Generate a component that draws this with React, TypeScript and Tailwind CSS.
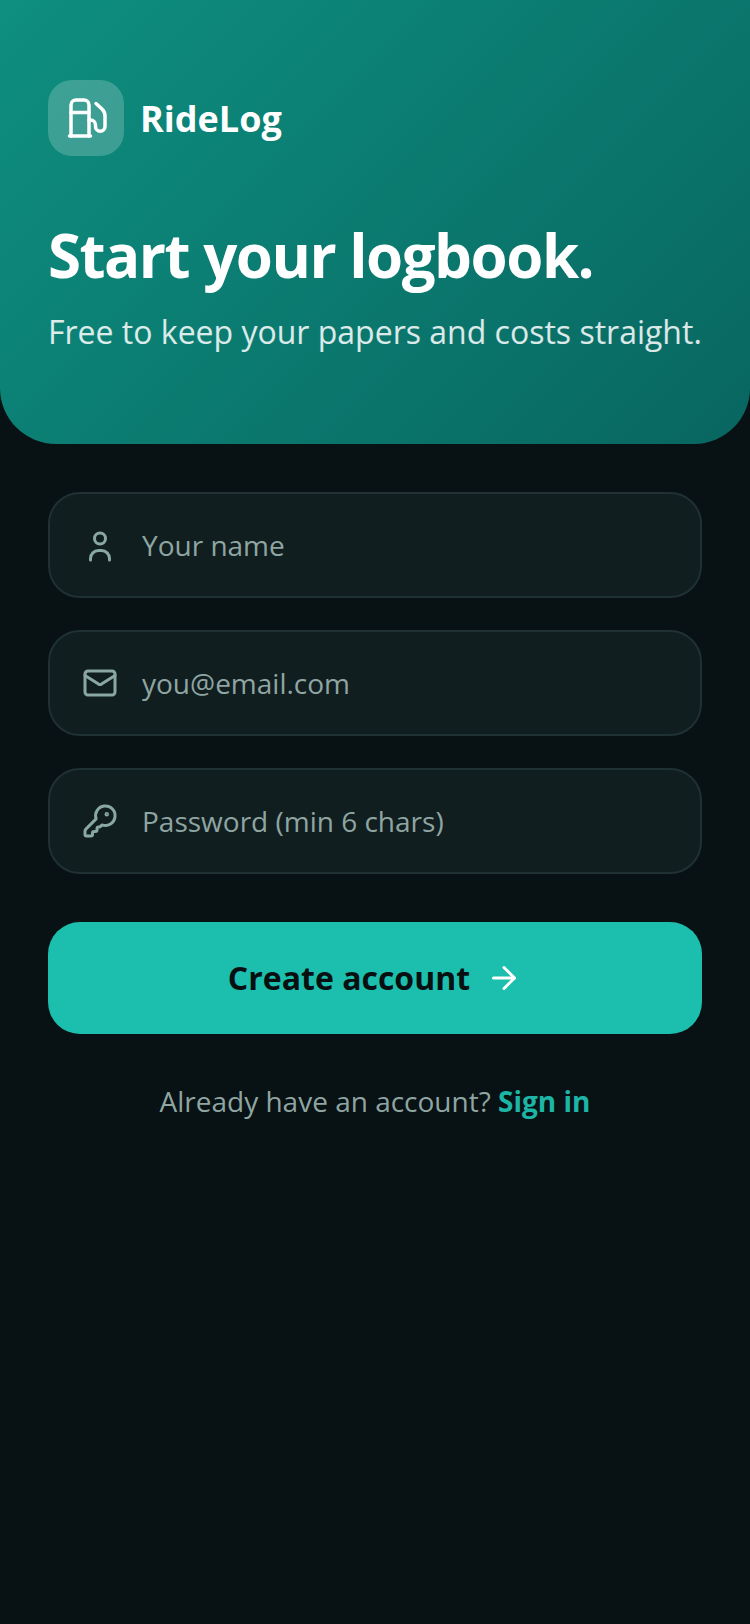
import { ArrowRight, KeyRound, Mail } from "lucide-react";

// the lucide versions are too wide for the pump and too big in the head for the user
function PumpIcon() {
  return (
    <svg width="48" height="48" viewBox="0 0 48 48" fill="none" stroke="currentColor" strokeWidth="3.5" strokeLinecap="round" strokeLinejoin="round" className="text-white">
      <path d="M9 42V11a5 5 0 0 1 5-5h8a5 5 0 0 1 5 5v31" />
      <path d="M7.5 42h21" />
      <path d="M9 18.5h18" />
      <path d="M27 26h1.5a5 5 0 0 1 5 5v1.5a4.75 4.75 0 0 0 9.5 0V22c0-3-1-5-3-7l-6-5.5" />
    </svg>
  );
}

function UserIcon() {
  return (
    <svg width="36" height="36" viewBox="0 0 36 36" fill="none" stroke="currentColor" strokeWidth="3" strokeLinecap="round" strokeLinejoin="round" className="shrink-0 text-[#8aa8a3]">
      <circle cx="18" cy="11.5" r="5.5" />
      <path d="M8.5 33v-1.5a8 8 0 0 1 8-8h3a8 8 0 0 1 8 8V33" />
    </svg>
  );
}

const fields = [
  { icon: <UserIcon />, placeholder: "Your name", type: "text" },
  { icon: <Mail size={36} className="shrink-0 text-[#8aa8a3]" />, placeholder: "you@email.com", type: "email" },
  { icon: <KeyRound size={36} className="shrink-0 text-[#8aa8a3]" />, placeholder: "Password (min 6 chars)", type: "password" },
];

function Field({ icon, placeholder, type }: (typeof fields)[number]) {
  return (
    <div className="flex h-[106px] items-center gap-[24px] rounded-[32px] border-2 border-[#1f3133] bg-[#111e20] px-[32px]">
      {icon}
      <input
        type={type}
        placeholder={placeholder}
        className="min-w-0 flex-1 bg-transparent text-[28px] text-white outline-none placeholder:text-[#8fa5a2]"
      />
    </div>
  );
}

export default function App() {
  return (
    <div className="min-h-[1624px] bg-[#081113] font-['Open_Sans',sans-serif]">
      <header className="h-[444px] rounded-b-[56px] bg-[linear-gradient(135deg,#0e8f80,#086660)] px-[48px] pt-[80px]">
        <div className="flex items-center gap-[16px]">
          <div className="flex h-[76px] w-[76px] items-center justify-center rounded-[24px] bg-white/20">
            <PumpIcon />
          </div>
          <span className="pt-[2px] text-[36px] font-bold text-white">RideLog</span>
        </div>
        <h1 className="mt-[57px] text-[60px] font-bold leading-[84px] tracking-[-1.5px] text-white">Start your logbook.</h1>
        <p className="mt-[13px] text-[32px] leading-[44px] text-white/85">Free to keep your papers and costs straight.</p>
      </header>

      <main className="px-[48px] pt-[48px]">
        <form className="flex flex-col gap-[32px]">
          {fields.map((field) => (
            <Field key={field.placeholder} {...field} />
          ))}
          <button
            type="button"
            className="mt-[16px] flex h-[112px] items-center justify-center gap-[16px] rounded-[32px] bg-[#1cbfae] text-[32px] font-bold text-[#070f11]"
          >
            Create account
            <ArrowRight size={36} className="text-white" />
          </button>
        </form>
        <p className="mt-[46px] text-center text-[28px] text-[#8fa5a2]">
          Already have an account? <span className="font-bold text-[#1cb5a6]">Sign in</span>
        </p>
      </main>
    </div>
  );
}
